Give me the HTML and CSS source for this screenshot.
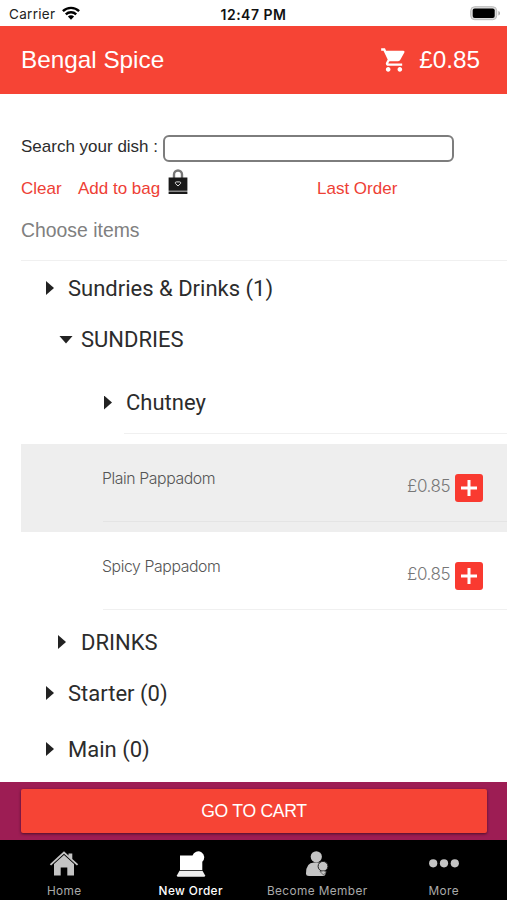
FILE: index.html
```html
<!DOCTYPE html>
<html lang="en">
<head>
<meta charset="utf-8">
<title>Bengal Spice</title>
<link rel="stylesheet" href="styles.css">
</head>
<body>
<div class="app">
  <div class="status">
    <div class="carrier"><span>Carrier</span>
      <svg width="18" height="14" viewBox="0 0 18 14" fill="none" stroke="#000" stroke-width="2.4"><path d="M.9 5.2a11.6 11.6 0 0 1 16.2 0M3.8 8.4a7.500 7.500 0 0 1 10.400 0"/><path d="M9 13.700 5.900 10.600a4.400 4.400 0 0 1 6.200 0z" fill="#000" stroke="none"/></svg>
    </div>
    <div class="time">12:47 PM</div>
    <svg class="battery" width="31" height="15" viewBox="0 0 31 15"><rect x=".7" y=".7" width="26" height="13" rx="4" fill="#ddd" stroke="#bbb" stroke-width="1"/><rect x="2.700" y="2.400" width="22" height="9.600" rx="2" fill="#000"/><path d="M28.400 5v4.600q1.600-.6 1.600-2.300T28.400 5z" fill="#aaa"/></svg>
  </div>
  <header class="header">
    <h1>Bengal Spice</h1>
    <div class="total">
      <svg width="28" height="28" viewBox="0 0 24 24" fill="#fff"><path d="M7 18c-1.100 0-1.990.9-1.990 2S5.900 22 7 22s2-.9 2-2-.9-2-2-2zM1 2v2h2l3.600 7.590-1.350 2.450c-.16.28-.25.61-.25.960 0 1.100.9 2 2 2h12v-2H7.420c-.14 0-.25-.11-.25-.25l.03-.12.9-1.630h7.450c.75 0 1.410-.41 1.750-1.030l3.580-6.490A1 1 0 0 0 20 4H5.210l-.94-2H1zm16 16c-1.100 0-1.990.9-1.990 2s.89 2 1.990 2 2-.9 2-2-.9-2-2-2z"/></svg>
      <span>£0.85</span>
    </div>
  </header>
  <main class="main">
    <label class="search"><span>Search your dish :</span><input type="text"></label>
    <div class="links">
      <a class="clear">Clear</a><a class="bag">Add to bag</a>
      <svg width="20" height="27" viewBox="0 0 20 27"><path d="M6 10V5.500a4 4 0 0 1 8 0V10" fill="none" stroke="#777" stroke-width="2.400"/><path d="M.6 8.500h18.800v13.300H.6zM.6 22.600h18.800v2.400H.6z" fill="#191919"/><path d="m10 17-2.600-2.500q-.6-1.500 1-1.600h3.200q1.600.1 1 1.600z" fill="none" stroke="#ddd"/></svg>
      <a class="last">Last Order</a>
    </div>
    <div class="choose">Choose items</div>
    <div class="row r1"><i class="caret"></i>Sundries &amp; Drinks (1)</div>
    <div class="row r2"><i class="caret down"></i>SUNDRIES</div>
    <div class="row r3"><i class="caret"></i>Chutney</div>
    <div class="line"></div>
    <div class="item active">
      <div class="body"><span class="name">Plain Pappadom</span><span class="price">£0.85</span><svg width="28" height="28" viewBox="0 0 28 28"><rect width="28" height="28" rx="3" fill="#f93a30"/><path d="M6 14h16M14 6v16" stroke="#fff" stroke-width="3"/></svg></div>
    </div>
    <div class="item">
      <div class="body"><span class="name">Spicy Pappadom</span><span class="price">£0.85</span><svg width="28" height="28" viewBox="0 0 28 28"><rect width="28" height="28" rx="3" fill="#f93a30"/><path d="M6 14h16M14 6v16" stroke="#fff" stroke-width="3"/></svg></div>
    </div>
    <div class="row r4"><i class="caret"></i>DRINKS</div>
    <div class="row r5"><i class="caret"></i>Starter (0)</div>
    <div class="row r6"><i class="caret"></i>Main (0)</div>
  </main>
  <div class="checkout"><button>GO TO CART</button></div>
  <nav class="tabs">
    <a class="tab"><svg width="30" height="28" viewBox="0 0 30 28" fill="#c4c4c4"><path d="M.8 14.200 15 1.300l4.500 4.100V3.500h3.800v5.400l5.900 5.300-1.300 1.300L15 3.800 2.100 15.500z"/><path d="M15 5 25 14v11.400h-6.700v-8h-6.600v8H5V14z"/></svg><span>Home</span></a>
    <a class="tab on"><svg width="30" height="28" viewBox="0 0 30 28" fill="#fff"><path d="M4 5.500h12.500a6 6 0 1 1 9.800 6.200V20H4z"/><path d="M3.500 20.800h23l2.500 4.500q.2 1.500-1 1.500H2q-1.200 0-1-1.500z" fill="#eee"/></svg><span>New Order</span></a>
    <a class="tab"><svg width="30" height="28" viewBox="0 0 30 28" fill="#c4c4c4"><circle cx="14.300" cy="6.800" r="5.600"/><path d="M4 23.500q0-11 8-11h5q5 0 6.500 6v5q0 2.500-3 2.500H7q-3 0-3-2.500z"/><circle cx="21" cy="16.300" r="4.900" stroke="#222"/><path d="m18 21.500 3.500-.7 3 1-3 3.200z" stroke="#333" stroke-width=".6"/></svg><span>Become Member</span></a>
    <a class="tab"><svg width="30" height="28" viewBox="0 0 30 28" fill="#c4c4c4"><circle cx="4.200" cy="13.300" r="4.100"/><circle cx="15" cy="13.300" r="4.100"/><circle cx="25.800" cy="13.300" r="4.100"/></svg><span>More</span></a>
  </nav>
</div>
</body>
</html>
```
FILE: styles.css
```css
* { box-sizing: border-box; }
body { margin: 0; background: #fff; font-family: "Liberation Sans", Arial, sans-serif; }
.app { width: 507px; height: 900px; display: flex; flex-direction: column; overflow: hidden; }
svg { display: block; flex: none; }

.status { height: 26px; flex: none; display: grid; grid-template-columns: 1fr auto 1fr; align-items: center; padding: 2px 6px 0 9px; font-family: Inter, sans-serif; font-size: 13.500px; color: #222; }
.carrier { display: flex; align-items: center; gap: 7px; letter-spacing: .3px; }
.carrier svg { margin-top: -3px; }
.time { font-weight: 600; color: #111; font-size: 14px; letter-spacing: .5px; margin-left: -3px; }
.battery { justify-self: end; margin-top: -1px; }

.header { height: 68px; flex: none; background: #f64435; color: #fff; display: flex; align-items: center; justify-content: space-between; padding: 0 27px 0 21px; }
.header h1 { margin: 0; font-size: 24.300px; font-weight: 400; }
.total { display: flex; align-items: center; gap: 11px; font-size: 24.300px; }

.main { height: 688px; flex: none; padding-top: 41px; color: #2c2c2c; }
.search { display: flex; height: 27px; align-items: center; padding-left: 21px; font-size: 17px; }
.search span { width: 142px; flex: none; white-space: nowrap; margin-top: -4px; }
.search input { width: 291px; height: 27px; border: 2px solid #7d7d7d; border-radius: 6px; padding: 0 6px; background: #fff; }
.links { height: 40px; display: flex; align-items: center; padding: 13px 0 0 21px; font-size: 17px; color: #ee4035; }
.clear { width: 57px; }
.bag { width: 90px; white-space: nowrap; }
.links svg { margin-top: -13px; }
.last { margin-left: 129px; }
.choose { height: 59px; margin-left: 21px; padding-top: 17px; font-size: 19.400px; line-height: 22px; color: #808080; border-bottom: 1px solid #f0f0f0; }

.row { display: flex; align-items: center; font-family: Roboto, sans-serif; font-size: 22px; height: 52px; padding-left: 46px; }
.caret { width: 22px; height: 14px; flex: none; }
.caret::before { content: ""; display: block; width: 8px; height: 14px; background: #222; clip-path: polygon(0 0, 100% 50%, 0 100%); }
.caret.down::before { width: 14px; height: 8px; margin-top: 3px; clip-path: polygon(0 0, 100% 0, 50% 100%); }
.r1 { height: 54px; }
.r2 { height: 49px; padding-left: 59px; }
.r3 { height: 69px; padding: 8px 0 0 104px; }
.r4 { height: 48px; padding: 0 0 4px 58px; }
.r4 .caret { width: 23px; }
.r5 { height: 55px; padding-bottom: 5px; }
.r6 { height: 57px; padding-bottom: 5px; }
.line { height: 11px; margin-left: 124px; border-top: 1px solid #f0f0f0; }

.item { height: 88px; margin-left: 21px; }
.item.active { background: #eee; }
.body { height: 78px; margin-left: 82px; border-bottom: 1px solid #f0f0f0; display: flex; align-items: center; padding-right: 24px; font-family: Inter, sans-serif; font-weight: 300; }
.active .body { border-color: #e4e4e4; }
.name { flex: 1; font-size: 15.800px; letter-spacing: -.4px; color: #555; margin: -8px 0 0 -1px; }
.price { width: 48px; font-size: 17px; letter-spacing: -.4px; color: #777; margin-top: 7px; }
.body svg { margin-top: 11px; }

.checkout { height: 58px; flex: none; background: #9d1d54; padding: 7px 20px 7px 21px; }
.checkout button { display: block; width: 100%; height: 44px; border: 0; border-radius: 2px; background: #f64435; color: #fff; font: 17.600px "Liberation Sans", Arial, sans-serif; letter-spacing: -.3px; box-shadow: 0 1px 3px #0008; }

.tabs { flex: 1; background: #000; display: grid; grid-template-columns: repeat(4, 1fr); padding-left: 1px; }
.tab { display: flex; flex-direction: column; align-items: center; padding-top: 10px; gap: 6px; font-family: Inter, sans-serif; font-size: 11.800px; line-height: 15px; letter-spacing: .4px; color: #aaa; white-space: nowrap; }
.on { color: #fff; font-weight: 500; }
```
